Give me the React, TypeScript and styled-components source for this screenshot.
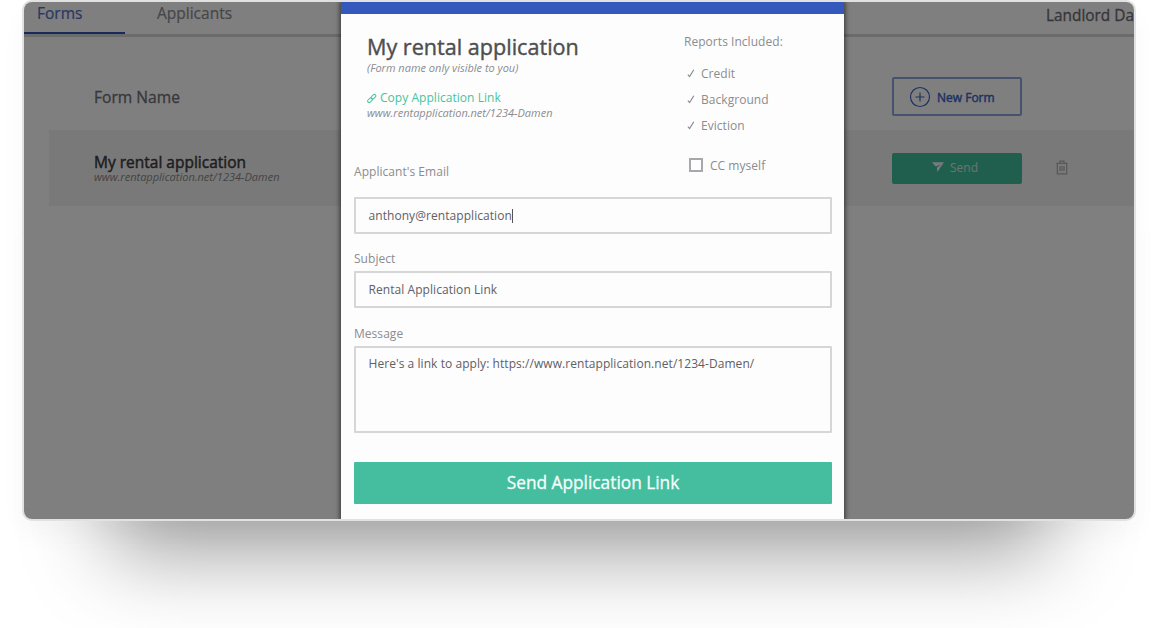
import React from "react";
import styled, { createGlobalStyle } from "styled-components";

const GlobalStyle = createGlobalStyle`
  *, *::before, *::after { box-sizing: border-box; }
  html, body { margin: 0; background: #fff; overflow: hidden; }
  body { font-family: "Open Sans", "Noto Sans", sans-serif; }
`;

const Stage = styled.main`
  width: 1160px;
  height: 628px;
  padding-left: 22px;
  overflow: hidden;
`;

const Frame = styled.div`
  position: relative;
  width: 1114px;
  height: 521px;
  border: 2px solid #e1e1e2;
  border-radius: 10px;
  overflow: hidden;
  background: #fff;
  box-shadow: 0 120px 80px -88px rgba(0, 0, 0, 0.38), 0 14px 26px rgba(0, 0, 0, 0.03);
`;

const TopBar = styled.header`
  display: flex;
  height: 35px;
  border-bottom: 3px solid #d6d6d6;
  white-space: nowrap;
`;

const Tab = styled.div<{ $active?: boolean; $width: number; $left: number }>`
  width: ${(p) => p.$width}px;
  height: ${(p) => (p.$active ? 32 : 31)}px;
  padding-left: ${(p) => p.$left}px;
  font-size: 15.5px;
  line-height: 22px;
  color: ${(p) => (p.$active ? "#5070c4" : "#8c8c92")};
  -webkit-text-stroke: 0.2px currentColor;
  border-bottom: ${(p) => (p.$active ? "2px solid #3054b4" : "none")};
`;

const Account = styled.div`
  margin-left: auto;
  width: 88px;
  font-size: 15.4px;
  line-height: 27px;
  color: #6c6c70;
  -webkit-text-stroke: 0.3px currentColor;
`;

const TableHead = styled.div`
  display: flex;
  align-items: center;
  height: 93px;
  padding: 26px 0 0 70px;
`;

const ColumnTitle = styled.div`
  width: 798px;
  height: 26px;
  font-size: 15.6px;
  line-height: 26px;
  color: #707076;
  -webkit-text-stroke: 0.3px currentColor;
`;

const TableRow = styled.div`
  display: flex;
  align-items: center;
  height: 76px;
  margin-left: 25px;
  padding-left: 45px;
  background: #f3f3f3;
`;

const FormCell = styled.div`
  width: 798px;
`;

const FormTitle = styled.div`
  font-size: 15.5px;
  line-height: 17px;
  color: #3c3c3e;
  -webkit-text-stroke: 0.45px currentColor;
`;

const FormUrl = styled.div`
  font-size: 11px;
  line-height: 12px;
  font-style: italic;
  color: #88888a;
`;

const Button = styled.button<{ $solid?: boolean }>`
  display: flex;
  align-items: center;
  justify-content: ${(p) => (p.$solid ? "center" : "flex-start")};
  gap: 6px;
  width: 130px;
  height: ${(p) => (p.$solid ? 31 : 39)}px;
  padding: ${(p) => (p.$solid ? "0 4px 2px 0" : "1px 0 0 15px")};
  font: 12px "Open Sans", sans-serif;
  color: ${(p) => (p.$solid ? "#d6e8e1" : "#3c64c4")};
  -webkit-text-stroke: ${(p) => (p.$solid ? "0" : "0.45px currentColor")};
  background: ${(p) => (p.$solid ? "#40be9a" : "transparent")};
  border: ${(p) => (p.$solid ? "none" : "2px solid #8ea6dc")};
  border-radius: 2px;
`;

const TrashSlot = styled.div`
  display: flex;
  margin: -2px 0 0 34px;
`;

const Scrim = styled.div`
  position: absolute;
  inset: 0;
  background: rgba(0, 0, 0, 0.5);
`;

const Modal = styled.section`
  position: absolute;
  top: 0;
  left: 317px;
  width: 503px;
  height: 518px;
  background: #fdfdfe;
  border-top: 12px solid #3558bc;
  box-shadow: 0 0 5px 1px rgba(0, 0, 0, 0.6);
`;

const ModalBody = styled.div`
  display: flex;
  flex-direction: column;
  padding: 0 12px 0 13px;
`;

const Summary = styled.div`
  display: grid;
  grid-template-columns: 330px 1fr;
  height: 183px;
`;

const Details = styled.div`
  display: flex;
  flex-direction: column;
  padding-top: 18px;
  white-space: nowrap;
`;

const Indent = styled.div`
  padding-left: 13px;
`;

const Title = styled.h1`
  margin: 0;
  font-size: 21.6px;
  font-weight: 400;
  line-height: 29px;
  color: #4e4e50;
  -webkit-text-stroke: 0.4px currentColor;
`;

const Note = styled.div`
  font-size: 11px;
  line-height: 14px;
  font-style: italic;
  color: #8c8c90;
`;

const CopyLink = styled.div`
  display: flex;
  align-items: center;
  gap: 3px;
  margin: 15px 0 0;
  font-size: 12px;
  line-height: 16px;
  letter-spacing: 0.04px;
  color: #45c4a0;
`;

const Label = styled.label<{ $top: number }>`
  margin-top: ${(p) => p.$top}px;
  font-size: 12px;
  line-height: 16px;
  letter-spacing: 0.04px;
  color: #8c8c90;
`;

const Reports = styled.div`
  padding-top: 20px;
  font-size: 12px;
  line-height: 16px;
  letter-spacing: 0.04px;
  color: #8c8c90;
`;

const ReportList = styled.ul`
  display: flex;
  flex-direction: column;
  gap: 10px;
  margin: 16px 0 0;
  padding: 0 0 0 3px;
  list-style: none;
`;

const Report = styled.li`
  display: flex;
  align-items: center;
  gap: 6px;
`;

const CcRow = styled.div`
  display: flex;
  align-items: center;
  gap: 7px;
  margin: 24px 0 0 5px;
`;

const CheckBox = styled.span`
  width: 14px;
  height: 14px;
  margin-top: -2px;
  border: 2px solid #a8a8ac;
`;

const Field = styled.div<{ $height: number; $top?: number }>`
  display: flex;
  height: ${(p) => p.$height}px;
  margin-top: ${(p) => p.$top ?? 0}px;
  padding: 8px 12.5px;
  font-size: 12px;
  line-height: 18px;
  letter-spacing: 0.06px;
  color: #606064;
  border: 2px solid #d6d6d8;
  border-radius: 1px;
  white-space: nowrap;
`;

const Message = styled(Field)`
  padding-top: 7px;
`;

const Caret = styled.span`
  width: 1px;
  height: 14px;
  margin-top: 2px;
  background: #555;
`;

const Submit = styled.button`
  height: 42px;
  margin-top: 29px;
  padding: 0 0 1px;
  font: 17.3px "Open Sans", sans-serif;
  color: #f4fffb;
  -webkit-text-stroke: 0.3px currentColor;
  background: #45bd9f;
  border: 0;
  border-radius: 1px;
`;

const PlusIcon = () => (
  <svg width="22" height="22" viewBox="0 0 22 22" fill="none" stroke="currentColor" strokeWidth="1.2">
    <circle cx="11" cy="11" r="9.5" />
    <path d="M11 6.5v9M6.5 11h9" />
  </svg>
);

const SendIcon = () => (
  <svg width="12" height="10" viewBox="0 0 12 10" fill="#f4f4f4">
    <path d="M0 .3h12L5.4 10 4.8 5.8 9 2.4 3.6 4.6z" />
  </svg>
);

const TrashIcon = () => (
  <svg width="12" height="15" viewBox="0 0 12 15" fill="none" stroke="#b0b0b0" strokeWidth="1.2">
    <path d="M.3 3.4h11.4M4 3.2V1.2h4v2M1.3 3.4v10.4h9.4V3.4M4 6v5M6 6v5M8 6v5" />
  </svg>
);

const LinkIcon = () => (
  <svg width="10" height="10" viewBox="0 0 10 10" fill="none" stroke="currentColor" strokeWidth="1">
    <rect x="-2.7" y="-1.5" width="5.4" height="3" rx="1.5" transform="translate(3 7.2) rotate(-45)" />
    <rect x="-2.7" y="-1.5" width="5.4" height="3" rx="1.5" transform="translate(6.5 3.7) rotate(-45)" />
  </svg>
);

const CheckIcon = () => (
  <svg width="8" height="10" viewBox="0 0 8 10" fill="none" stroke="currentColor" strokeWidth="1.2">
    <path d="M.9 5.6 2.6 7.6 6.8 .8" />
  </svg>
);

const reports = ["Credit", "Background", "Eviction"];

export default function App() {
  return (
    <Stage>
      <GlobalStyle />
      <Frame>
        <TopBar>
          <Tab $active $width={101} $left={13}>Forms</Tab>
          <Tab $width={200} $left={32}>Applicants</Tab>
          <Account>Landlord Da</Account>
        </TopBar>
        <TableHead>
          <ColumnTitle>Form Name</ColumnTitle>
          <Button><PlusIcon />New Form</Button>
        </TableHead>
        <TableRow>
          <FormCell>
            <FormTitle>My rental application</FormTitle>
            <FormUrl>www.rentapplication.net/1234-Damen</FormUrl>
          </FormCell>
          <Button $solid><SendIcon />Send</Button>
          <TrashSlot><TrashIcon /></TrashSlot>
        </TableRow>
        <Scrim />
        <Modal>
          <ModalBody>
            <Summary>
              <Details>
                <Indent>
                  <Title>My rental application</Title>
                  <Note>(Form name only visible to you)</Note>
                  <CopyLink><LinkIcon />Copy Application Link</CopyLink>
                  <Note>www.rentapplication.net/1234-Damen</Note>
                </Indent>
                <Label $top={44}>Applicant's Email</Label>
              </Details>
              <Reports>
                Reports Included:
                <ReportList>
                  {reports.map((name) => (
                    <Report key={name}><CheckIcon />{name}</Report>
                  ))}
                </ReportList>
                <CcRow><CheckBox />CC myself</CcRow>
              </Reports>
            </Summary>
            <Field $height={37}>anthony@rentapplication<Caret /></Field>
            <Label $top={17}>Subject</Label>
            <Field $height={37} $top={4}>Rental Application Link</Field>
            <Label $top={18}>Message</Label>
            <Message $height={87} $top={4}>Here's a link to apply: https://www.rentapplication.net/1234-Damen/</Message>
            <Submit>Send Application Link</Submit>
          </ModalBody>
        </Modal>
      </Frame>
    </Stage>
  );
}
